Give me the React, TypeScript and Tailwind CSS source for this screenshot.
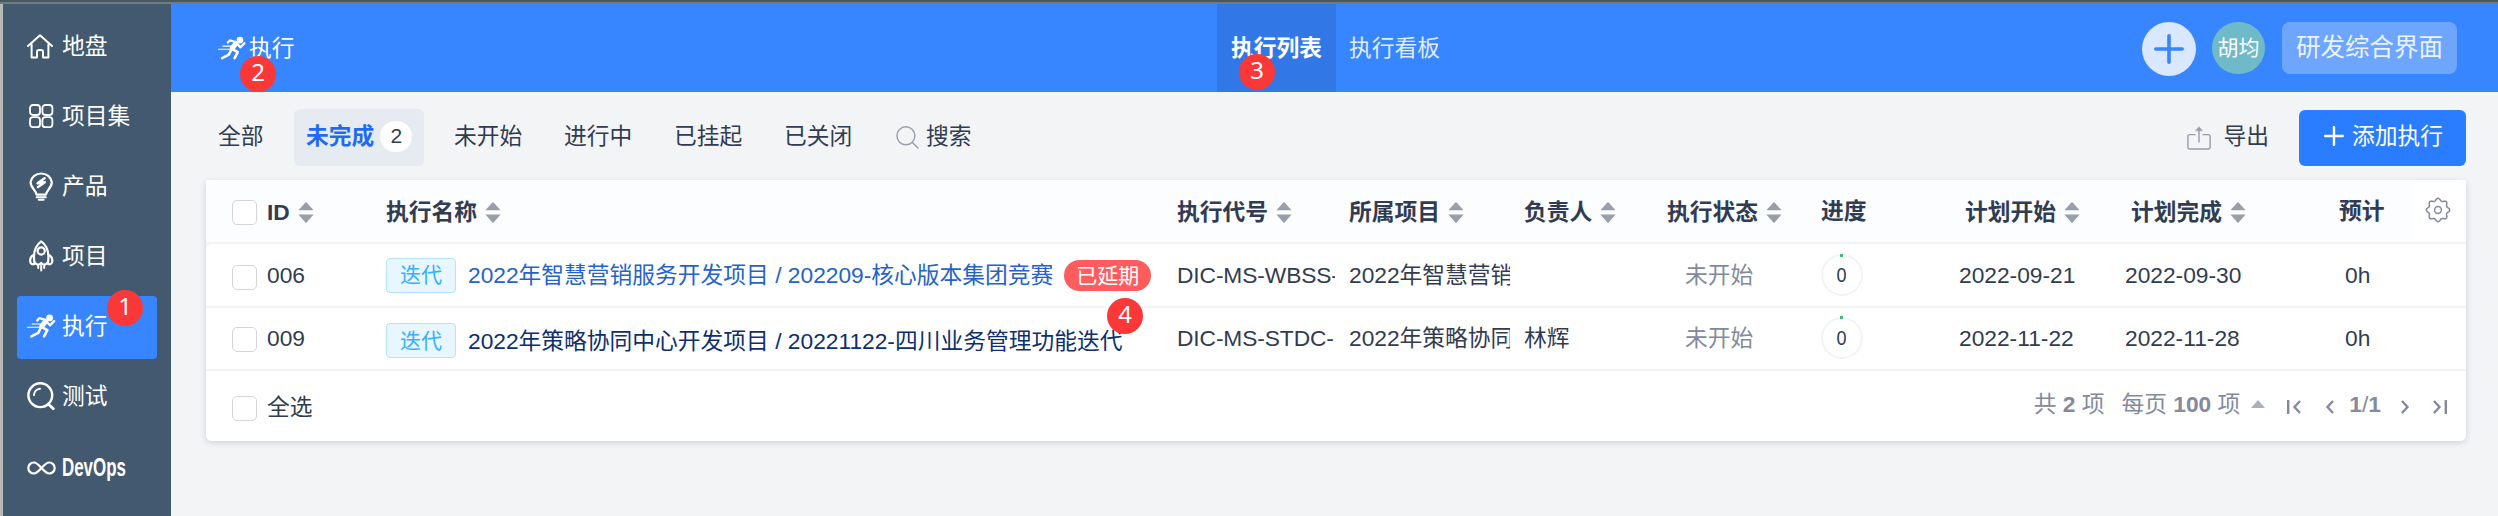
import React from "react";

type IconProps = { className?: string };

const HomeIcon = ({ className }: IconProps) => (
  <svg viewBox="0 0 26 25" className={className} fill="none" stroke="currentColor" strokeWidth="2" strokeLinejoin="round" strokeLinecap="round">
    <path d="M1 12 L13 1.3 L25 12 M4.6 10.5 V23.5 H10 V17.8 C10 16.6 10.8 16 12 16 H14 C15.2 16 16 16.6 16 17.8 V23.5 H21.4 V10.5" />
  </svg>
);
const GridIcon = ({ className }: IconProps) => (
  <svg viewBox="0 0 26 26" className={className} fill="none" stroke="currentColor" strokeWidth="1.8">
    <rect x="2" y="2" width="10" height="10" rx="3" />
    <rect x="14.4" y="2" width="10" height="10" rx="3" />
    <rect x="2" y="14.2" width="10" height="10" rx="3" />
    <rect x="14.4" y="14.2" width="10" height="10" rx="3" />
  </svg>
);
const BulbIcon = ({ className }: IconProps) => (
  <svg viewBox="0 0 26 30" className={className} fill="none" stroke="currentColor" strokeWidth="2.2" strokeLinecap="round" strokeLinejoin="round">
    <path d="M8.5 23.6 C8.5 19.5 2.6 17.4 2.6 11.2 A10.7 10.1 0 0 1 23.8 11.2 C23.8 17.4 18 19.5 18 23.6 Z" />
    <path d="M16.6 7.2 L9.6 12.2 L16.8 11.2 L10 16" strokeWidth="2.5" />
    <path d="M8.6 26.3 H17.8" strokeWidth="2" />
    <path d="M10.8 28.8 H15.6" strokeWidth="2" />
  </svg>
);
const RocketIcon = ({ className }: IconProps) => (
  <svg viewBox="0 0 26 32" className={className} fill="none" stroke="currentColor" strokeWidth="2.2" strokeLinecap="round" strokeLinejoin="round">
    <path d="M6.4 22.6 C5 13 7.5 5.5 13.2 1.4 C19 5.5 21.4 13 20 22.6" />
    <circle cx="13.2" cy="11" r="3.6" />
    <path d="M6 14.6 C2.6 16.6 1.6 19.8 2.6 22.8 C4 25 6.5 24.6 7.2 22.8 C9 25.2 11.6 25 13.2 22.8 C14.8 25 17.4 25.2 19.2 22.8 C20 24.6 22.6 25 23.9 22.8 C24.9 19.8 23.8 16.6 20.4 14.6" />
    <path d="M10.2 25.5 V28 M13.2 25.5 V30.4 M16.2 25.5 V28" strokeWidth="2" />
  </svg>
);
const RunIcon = ({ className }: IconProps) => (
  <svg viewBox="0 0 88 74" className={className} fill="none" stroke="currentColor" strokeLinecap="round" strokeLinejoin="round">
    <circle cx="69" cy="12" r="10.5" fill="currentColor" stroke="none" />
    <path d="M1 41 H42" strokeWidth="3.5" />
    <path d="M15 31 H42" strokeWidth="3.5" />
    <path d="M31 20 L37 13 L56 18" strokeWidth="7" />
    <path d="M56 23 L45 38" strokeWidth="16" />
    <path d="M62 26 L70 35 L83 22" strokeWidth="7" />
    <path d="M42 42 L34 58 L13 69" strokeWidth="8" />
    <path d="M48 42 L62 50 L52 69" strokeWidth="8" />
  </svg>
);
const QualityIcon = ({ className }: IconProps) => (
  <svg viewBox="0 0 28 28" className={className} fill="none" stroke="currentColor" strokeWidth="2.4" strokeLinecap="round">
    <circle cx="13.3" cy="13.2" r="11.9" />
    <path d="M7 13 A6.6 6.6 0 0 1 13 6.8" strokeWidth="2" />
    <path d="M21.3 22 L26.3 26.8" strokeWidth="2.8" />
  </svg>
);
const InfinityIcon = ({ className }: IconProps) => (
  <svg viewBox="0 0 29 14" className={className} fill="none" stroke="currentColor" strokeWidth="2.2">
    <path d="M14.5 7 C11.5 3.6 9.6 1.5 6.8 1.5 A5.5 5.5 0 0 0 6.8 12.5 C9.6 12.5 11.5 10.4 14.5 7 C17.5 3.6 19.4 1.5 22.2 1.5 A5.5 5.5 0 0 1 22.2 12.5 C19.4 12.5 17.5 10.4 14.5 7 Z" />
  </svg>
);
const SearchIcon = ({ className }: IconProps) => (
  <svg viewBox="0 0 23 23" className={className} fill="none" stroke="currentColor" strokeWidth="1.4" strokeLinecap="round">
    <circle cx="9.9" cy="9.8" r="9" />
    <path d="M16.2 16.2 L22 22" />
  </svg>
);
const ExportIcon = ({ className }: IconProps) => (
  <svg viewBox="0 0 24 24" className={className} fill="none" stroke="currentColor" strokeWidth="1.4" strokeLinecap="round" strokeLinejoin="round">
    <path d="M8 8.6 H3 C1.6 8.6 0.9 9.3 0.9 10.6 V21 C0.9 22.3 1.6 23 3 23 H21 C22.4 23 23.1 22.3 23.1 21 V10.6 C23.1 9.3 22.4 8.6 21 8.6 H16" />
    <path d="M12 16 V3" />
    <path d="M8.8 4.6 L12 0.8 L15.2 4.6 Z" fill="currentColor" strokeWidth="0.6" />
  </svg>
);

// Eight-lobed gear outline, sampled as a polar curve around (13, 13).
const gearPoints = Array.from({ length: 96 }, (_, i) => {
  const a = (i / 96) * Math.PI * 2;
  const r = 10.5 + 1.2 * Math.cos(8 * a);
  return `${(13 + r * Math.cos(a)).toFixed(2)},${(13 + r * Math.sin(a)).toFixed(2)}`;
}).join(" ");
const GearIcon = ({ className }: IconProps) => (
  <svg viewBox="0 0 26 26" className={className} fill="none" stroke="currentColor" strokeWidth="1.5" strokeLinejoin="round">
    <circle cx="13" cy="13" r="3.4" />
    <polygon points={gearPoints} />
  </svg>
);
const SortIcon = ({ className = "" }: IconProps) => (
  <svg viewBox="0 0 16 21" className={"mt-0.5 h-[21px] w-4 shrink-0 text-[#989eab] " + className} fill="currentColor">
    <path d="M7.4 0.6 Q8 0 8.6 0.6 L15.6 8.3 H0.4 Z" />
    <path d="M7.4 20.4 Q8 21 8.6 20.4 L15.6 12.5 H0.4 Z" />
  </svg>
);
const Chevron = ({ d, className = "" }: { d: string; className?: string }) => (
  <svg viewBox="0 0 14 14" className={"h-3.5 w-3.5 shrink-0 text-[#838a9d] " + className} fill="none" stroke="currentColor" strokeWidth="2.4">
    <path d={d} />
  </svg>
);

const Marker = ({ n, className }: { n: number; className: string }) => (
  <span className={"absolute z-10 flex h-9 w-9 items-center justify-center rounded-full bg-[#fb3838] pb-1 font-['Noto_Sans','Noto_Sans_CJK_SC',sans-serif] text-[24px] leading-none text-white " + className}>
    {n}
  </span>
);

const Checkbox = ({ className = "" }: IconProps) => (
  <span className={"h-[25px] w-[25px] shrink-0 rounded-[5px] border border-[#d5d5d8] bg-white " + className} />
);

const nav = [
  { label: "地盘", Icon: HomeIcon, size: "h-[25px] w-[26px]" },
  { label: "项目集", Icon: GridIcon, size: "ml-px h-[26px] w-[26px]" },
  { label: "产品", Icon: BulbIcon, size: "ml-px h-[30px] w-[26px]" },
  { label: "项目", Icon: RocketIcon, size: "ml-px h-[32px] w-[26px]" },
  { label: "执行", Icon: RunIcon, size: "h-[24px] w-[29px]" },
  { label: "测试", Icon: QualityIcon, size: "h-[28px] w-[28px]" },
  { label: "DevOps", Icon: InfinityIcon, size: "h-[14px] w-[29px]" },
];

const COLS =
  "grid grid-cols-[180px_792px_171px_175px_144px_144px_142px_166px_208px_138px]";

const rows = [
  { id: "006", name: "2022年智慧营销服务开发项目 / 202209-核心版本集团竞赛", code: "DIC-MS-WBSS-", project: "2022年智慧营销", owner: "", start: "2022-09-21", end: "2022-09-30", late: true },
  { id: "009", name: "2022年策略协同中心开发项目 / 20221122-四川业务管理功能迭代", code: "DIC-MS-STDC-", project: "2022年策略协同", owner: "林辉", start: "2022-11-22", end: "2022-11-28", late: false },
];

const Ring = () => (
  <span className="relative flex h-[42px] w-[42px] items-center justify-center rounded-full border-[2.5px] border-[#f2f3f5] text-[20px] leading-none">
    <span className="scale-x-90">0</span>
    <span className="absolute -top-[2.5px] left-[17px] h-[3px] w-[3px] bg-[#45b97c]" />
  </span>
);

export default function App() {
  return (
    <div className="flex h-[516px] w-[2498px] flex-col overflow-hidden bg-[#f3f4f6] font-['Liberation_Sans','Noto_Sans_CJK_SC',sans-serif] text-[22.75px] leading-[34px] whitespace-nowrap text-[#313c52]">
      <div className="h-1 shrink-0 border-b-2 border-[#6f7c80] bg-[#465960]" />
      <div className="flex flex-1">
        <aside className="w-[171px] shrink-0 border-l-[3px] border-[#b5b9b7] bg-[#435970] pt-3 text-white">
          <nav className="flex flex-col gap-[7px] pl-3.5">
            {nav.map(({ label, Icon, size }) => (
              <div key={label} className={"relative flex h-[63px] w-[140px] items-center rounded " + (label === "DevOps" ? "" : "pb-[3px] ") + (label === "执行" ? "bg-[#3785ff]" : "")}>
                <span className="flex w-[45px] shrink-0 items-center pl-2.5">
                  <Icon className={"shrink-0 " + size} />
                </span>
                {label === "DevOps" ? (
                  <span className="origin-left scale-x-[0.65] pb-0.5 text-[26px] font-bold">{label}</span>
                ) : (
                  <span>{label}</span>
                )}
                {label === "执行" && <Marker n={1} className="-top-1.5 left-[90px]" />}
              </div>
            ))}
          </nav>
        </aside>

        <main className="flex min-w-0 flex-1 flex-col">
          <header className="flex h-[88px] shrink-0 bg-[#3785ff] pr-10 text-white">
            <div className="relative flex w-[1046px] items-center pb-px pl-[47px]">
              <RunIcon className="mr-[3px] h-[24px] w-[28px]" />
              <span>执行</span>
              <Marker n={2} className="top-[52px] left-[69px]" />
            </div>
            <div className="relative flex w-[119px] items-center justify-center bg-[#3178e6]">
              <b>执行列表</b>
              <Marker n={3} className="top-[50px] left-[22px]" />
            </div>
            <div className="flex flex-1 items-center pl-[13px] text-[#e1ecff]">执行看板</div>
            <div className="flex items-start pt-[18px]">
              <span className="mr-4 flex h-[54px] w-[54px] items-center justify-center rounded-full bg-[#d9e7ff] text-[#3785ff]">
                <svg viewBox="0 0 30 30" className="h-[30px] w-[30px]" stroke="currentColor" strokeWidth="3.6" strokeLinecap="round">
                  <path d="M15 1.8 V28.2 M1.8 15 H28.2" />
                </svg>
              </span>
              <span className="mr-[17px] flex h-[52px] w-[53px] items-center justify-center rounded-full bg-[#6ebac8] text-[21px]">胡均</span>
              <span className="mr-[1px] flex h-[52px] w-[175px] items-center justify-center rounded-lg bg-[#6ea6ff] text-[24.5px] text-[#eaf2ff]">研发综合界面</span>
            </div>
          </header>

          <div className="mt-[17px] flex h-[57px] items-center pr-8 pl-[47px]">
            <span className="w-[76px] pb-[3px]">全部</span>
            <span className="flex h-[57px] w-[130px] items-center gap-1.5 rounded-md bg-[#e6eaf1] pb-[3px] pl-3">
              <b className="text-[#1f6bf0]">未完成</b>
              <span className="flex h-[31px] w-8 items-center justify-center rounded-full bg-white text-[21px]">2</span>
            </span>
            <span className="ml-[30px] w-[110px] pb-[3px]">未开始</span>
            <span className="w-[110px] pb-[3px]">进行中</span>
            <span className="w-[110px] pb-[3px]">已挂起</span>
            <span className="w-[112px] pb-[3px]">已关闭</span>
            <SearchIcon className="mr-[7px] h-[23px] w-[23px] text-[#969dab]" />
            <span className="pb-[3px]">搜索</span>
            <ExportIcon className="mr-[13px] ml-auto h-6 w-6 text-[#969dab]" />
            <span className="mr-[30px] pb-[3px]">导出</span>
            <span className="flex h-14 w-[167px] items-center rounded-md bg-[#2b7dff] pb-[3px] pl-[25px] text-white">
              <svg viewBox="0 0 20 20" className="mr-2 h-5 w-5" stroke="currentColor" strokeWidth="2.4" strokeLinecap="round">
                <path d="M10 1.2 V18.8 M1.2 10 H18.8" />
              </svg>
              添加执行
            </span>
          </div>

          <section className="mt-[14px] ml-[35px] w-[2260px] rounded-b-md shadow-[0_2px_6px_rgba(30,40,60,0.16)]">
            <div className={COLS + " h-16 items-center border-b-2 border-[#f2f3f5] bg-[#fcfdfe] font-bold"}>
              <span className="flex items-center pt-px pl-[26px]">
                <Checkbox className="mt-px mr-[10px]" />
                ID
                <SortIcon className="ml-2" />
              </span>
              <span className="flex items-center gap-2 pt-px">执行名称<SortIcon /></span>
              <span className="-ml-px flex items-center gap-2 pt-px">执行代号<SortIcon /></span>
              <span className="flex items-center gap-2 pt-px">所属项目<SortIcon /></span>
              <span className="flex items-center gap-2 pt-px">负责人<SortIcon /></span>
              <span className="-ml-px flex items-center gap-2 pt-px">执行状态<SortIcon /></span>
              <span className="pl-[9px]">进度</span>
              <span className="flex items-center gap-2 pt-px pl-[11px]">计划开始<SortIcon /></span>
              <span className="flex items-center gap-2 pt-px pl-[11px]">计划完成<SortIcon /></span>
              <span className="flex items-center pl-[11px]">
                预计
                <span className="ml-[27px] flex h-[58px] w-[52px] items-center justify-center rounded-md bg-white">
                  <GearIcon className="mb-0.5 h-[26px] w-[26px] text-[#8288a0]" />
                </span>
              </span>
            </div>

            {rows.map((r, i) => (
              <div key={r.id} className={COLS + " relative items-center border-b-2 border-[#f2f3f5] bg-white " + (i === 0 ? "h-16 rounded-tl-md" : "h-[63px] pb-0.5")}>
                <span className="flex items-center pl-[26px]">
                  <Checkbox className="mt-1 mr-[10px]" />
                  {r.id}
                </span>
                <span className={"flex items-center " + (i === 0 ? "" : "pt-1.5")}>
                  <span className="mr-3 flex h-[35px] w-[70px] items-center justify-center rounded border border-[#b5e2ff] bg-[#e8f6ff] text-[21px] text-[#36b0ff]">迭代</span>
                  <span className={r.late ? "text-[#2463c7]" : "text-[#0d2f6e]"}>{r.name}</span>
                  {r.late && (
                    <span className="ml-[11px] flex h-[31px] w-[87px] items-center justify-center rounded-full bg-[#ff5d5d] text-[21px] leading-none text-white">已延期</span>
                  )}
                </span>
                <span className="-ml-px w-[158px] overflow-hidden tracking-[-0.1px]">{r.code}</span>
                <span className="w-[161px] overflow-hidden">{r.project}</span>
                <span>{r.owner}</span>
                <span className="pl-[17px] text-[#838a9d]">未开始</span>
                <span className="pl-[9px]"><Ring /></span>
                <span className="pl-[5px]">{r.start}</span>
                <span className="pl-[5px]">{r.end}</span>
                <span className="pl-[17px]">0h</span>
                {i === 0 && <Marker n={4} className="top-[54px] left-[901px]" />}
              </div>
            ))}

            <div className="flex h-[70px] items-center rounded-b-md bg-white pr-[19px] pl-[26px]">
              <Checkbox className="mt-1 mr-[10px]" />
              <span className="pt-0.5">全选</span>
              <div className="ml-auto flex items-center pb-1 text-[#838a9d]">
                <span className="mr-[17px]">共 <b>2</b> 项</span>
                <span className="mr-[11px]">每页 <b>100</b> 项</span>
                <svg viewBox="0 0 14 8" className="mr-[22px] h-2 w-3.5 text-[#a9afbf]" fill="currentColor"><path d="M7 0 L14 8 H0 Z" /></svg>
                <Chevron d="M1.2 0 V14 M13 1 L7.5 7 L13 13" className="mt-1.5 mr-[21px]" />
                <Chevron d="M11 1 L5.5 7 L11 13" className="mt-1.5 mr-[13px]" />
                <span className="mr-[18px]"><b>1</b>/<b>1</b></span>
                <Chevron d="M3 1 L8.5 7 L3 13" className="mt-1.5 mr-[20px]" />
                <Chevron d="M1 1 L6.5 7 L1 13 M12.8 0 V14" className="mt-1.5" />
              </div>
            </div>
          </section>
        </main>
      </div>
    </div>
  );
}
